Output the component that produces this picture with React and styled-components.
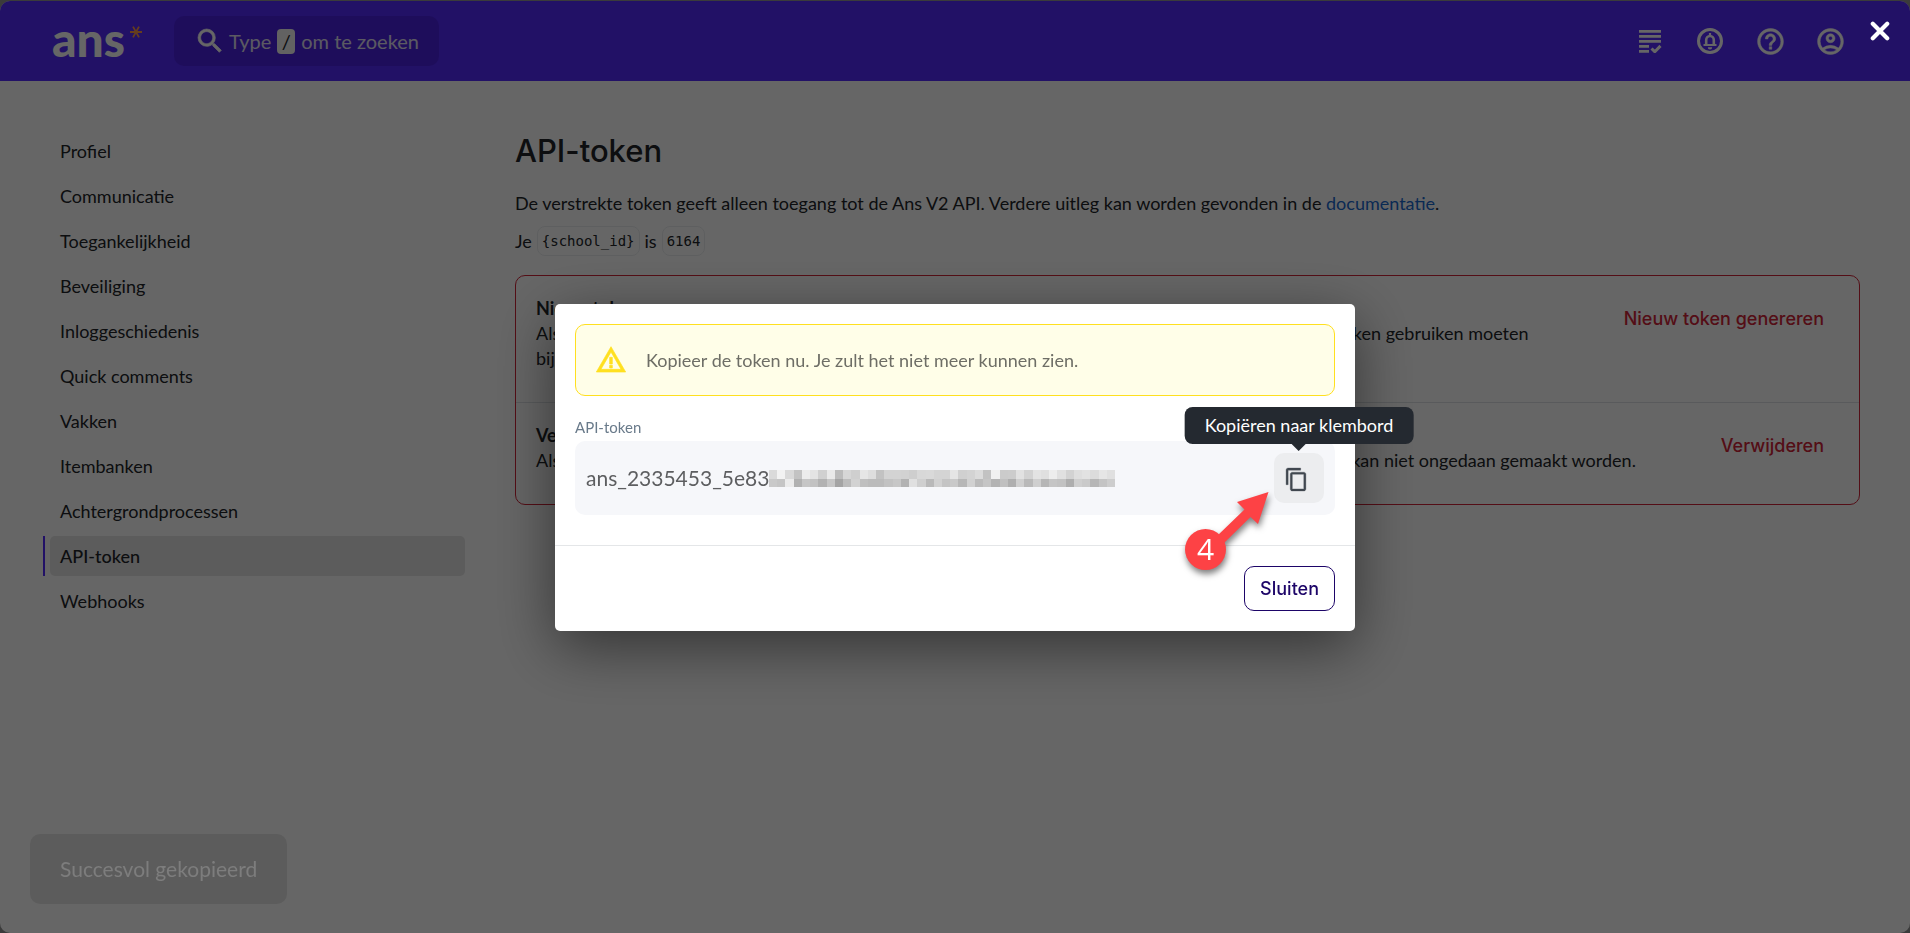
import React from 'react'
import styled, { createGlobalStyle } from 'styled-components'
import {
  MdSearch,
  MdHelpOutline,
  MdOutlineAccountCircle,
  MdContentCopy,
  MdWarningAmber
} from 'react-icons/md'

const colors = {
  brand: '#552bff',
  brandDark: '#4d22e4',
  navy: '#1d0568',
  text: '#212529',
  danger: '#d22438',
  link: '#1a69d0',
  warning: '#ffe01f'
}

const textFont = "Lato, 'Open Sans', sans-serif"
const headFont = "Inter, 'Open Sans', sans-serif"

const GlobalStyle = createGlobalStyle`
  * {
    box-sizing: border-box;
  }

  body {
    margin: 0;
    background: #939393;
    color: ${colors.text};
    font-family: ${textFont};
    font-size: 18px;
    line-height: 25px;
  }

  button {
    font: inherit;
    border: 0;
    padding: 0;
    background: none;
    cursor: pointer;
  }

  /* the icon set puts an empty bounding path in every icon */
  svg path[fill='none'][d^='M0 0h24'] {
    stroke: none;
  }
`

const Page = styled.div`
  min-height: calc(100vh - 1px);
  margin-top: 1px;
  border-radius: 10px;
  overflow: hidden;
  background: #ffffff;
`

const TopBar = styled.header`
  display: flex;
  align-items: center;
  height: 80px;
  padding: 0 50px 0 52px;
  background: ${colors.brand};
`

const Logo = styled.a`
  display: flex;
  color: #ffffff;
  font-size: 48px;
  font-weight: 900;
  line-height: 46px;
  padding-bottom: 4px;
  text-decoration: none;

  svg {
    margin: 10px 0 0 5px;
  }
`

const Search = styled.button`
  display: flex;
  align-items: center;
  height: 50px;
  margin-left: 32px;
  padding: 0 20px;
  border-radius: 10px;
  background: ${colors.brandDark};
  color: #e4e0f4;
  font-size: 20px;

  svg {
    margin-right: 3px;
    color: #ffffff;
  }
`

const Key = styled.kbd`
  width: 18px;
  margin: 0 6px;
  border-radius: 4px;
  background: #f4f4f4;
  color: ${colors.text};
  font-family: ${textFont};
  text-align: center;
`

const Tools = styled.div`
  display: flex;
  margin-left: auto;
`

const Tool = styled.button`
  display: flex;
  justify-content: center;
  align-items: center;
  width: 60px;
  height: 50px;
  color: #ffffff;
`

const Columns = styled.div`
  display: grid;
  grid-template-columns: 422px 1fr;
  gap: 50px;
  padding: 50px 50px 0 43px;
`

const Menu = styled.nav`
  display: flex;
  flex-direction: column;
  gap: 5px;
`

const MenuItem = styled.a`
  display: flex;
  height: 40px;
  border-left: 2px solid ${p => (p.$active ? colors.brand : 'transparent')};
  padding-left: 5px;
  color: inherit;
  font-weight: ${p => (p.$active ? 500 : 400)};
  line-height: 40px;
  text-decoration: none;

  span {
    flex: 1;
    padding: 0 10px;
    border-radius: 5px;
    background: ${p => (p.$active ? '#e6e6e6' : 'none')};
  }
`

const Title = styled.h1`
  margin: 0 0 20px;
  font-family: ${headFont};
  font-size: 31px;
  font-weight: 500;
  line-height: 40px;
`

const Intro = styled.p`
  margin: 0 0 10px;

  a {
    color: ${colors.link};
    text-decoration: none;
  }
`

const SchoolId = styled.p`
  display: flex;
  align-items: center;
  gap: 5px;
  margin: 0 0 19px;
`

const Code = styled.code`
  padding: 0 4px;
  border: 1px solid #eceef0;
  border-radius: 8px;
  font-family: 'DejaVu Sans Mono', monospace;
  font-size: 14px;
  line-height: 28px;
`

const DangerZone = styled.section`
  border: 1px solid ${colors.danger};
  border-radius: 10px;
`

const DangerRow = styled.div`
  display: flex;
  justify-content: space-between;
  align-items: flex-start;
  padding: 20px 20px 31px;

  & + & {
    border-top: 1px solid #dee2e6;
  }

  p {
    margin: 0;
  }
`

const DangerButton = styled.button`
  padding: 0 15px;
  color: ${colors.danger};
  font-family: ${headFont};
  font-weight: 500;
  line-height: 45px;
  white-space: nowrap;
`

const Overlay = styled.div`
  position: fixed;
  inset: 0;
  display: flex;
  justify-content: center;
  align-items: center;
  padding-top: 2px;
  background: rgba(0, 0, 0, 0.6);
`

const CloseButton = styled.button`
  position: absolute;
  top: 21px;
  right: 20px;
  display: flex;
  color: #ffffff;
`

const Toast = styled.div`
  position: absolute;
  left: 30px;
  bottom: 29px;
  padding: 0 30px;
  border-radius: 10px;
  background: rgba(0, 0, 0, 0.1);
  color: #7d7d7d;
  font-size: 21px;
  line-height: 70px;
`

const Modal = styled.div`
  position: relative;
  width: 800px;
  max-width: 100%;
  border-radius: 5px;
  background: #ffffff;
  box-shadow: 0 16px 60px rgba(0, 0, 0, 0.5);
`

const ModalBody = styled.div`
  padding: 20px 20px 30px;
`

const Notice = styled.div`
  display: flex;
  align-items: center;
  gap: 19px;
  height: 72px;
  margin-bottom: 20px;
  padding: 0 19px;
  border: 1px solid ${colors.warning};
  border-radius: 10px;
  background: #fffee8;
  color: #6e6e66;

  svg {
    color: ${colors.warning};
  }
`

const Label = styled.label`
  display: block;
  margin-bottom: 3px;
  color: #697a8a;
  font-size: 15px;
  line-height: 22px;
`

const TokenBox = styled.div`
  display: flex;
  align-items: center;
  height: 74px;
  padding: 0 11px;
  border-radius: 10px;
  background: #f6f7fa;
`

const TokenInput = styled.input`
  width: 183px;
  padding: 0 0 2px;
  border: 0;
  outline: 0;
  background: none;
  color: #5d5e60;
  font-family: ${textFont};
  font-size: 21px;
`

const CopyButton = styled.button`
  && {
    padding: 2px 0 0 10px;
  }
  position: relative;
  display: flex;
  align-items: center;
  width: 50px;
  height: 50px;
  margin-left: auto;
  border-radius: 10px;
  background: #ecedef;
  color: #414850;
`

const Tooltip = styled.span`
  position: absolute;
  left: 50%;
  bottom: 59px;
  transform: translateX(-50%);
  padding: 0 20px;
  border-radius: 8px;
  background: #242930;
  color: #ffffff;
  line-height: 37px;
  white-space: nowrap;

  &::after {
    content: '';
    position: absolute;
    top: 100%;
    left: 50%;
    margin-left: -7px;
    border: 7px solid transparent;
    border-top-color: #242930;
    border-bottom: 0;
  }
`

const ModalFooter = styled.footer`
  display: flex;
  justify-content: flex-end;
  padding: 20px;
  border-top: 1px solid #e4e6e8;
`

const OutlineButton = styled.button`
  && {
    padding: 0 15px;
    border: 1px solid ${colors.navy};
  }
  border-radius: 10px;
  color: ${colors.navy};
  font-family: ${headFont};
  font-weight: 500;
  line-height: 43px;
`

const Marker = styled.svg`
  position: absolute;
  right: 76px;
  bottom: 49px;
  filter: drop-shadow(1px 4px 3px rgba(0, 0, 0, 0.5));
  pointer-events: none;

  text {
    font-family: 'Open Sans', sans-serif;
    font-size: 30px;
  }
`

const menu = [
  'Profiel',
  'Communicatie',
  'Toegankelijkheid',
  'Beveiliging',
  'Inloggeschiedenis',
  'Quick comments',
  'Vakken',
  'Itembanken',
  'Achtergrondprocessen',
  'API-token',
  'Webhooks'
]

// grey level of every block in the masked part of the token
const maskRows = [
  'da f2 d9 c3 ec e4 d0 e9 bb d6 cf e6 de c2 d3 d3 d2 ce d8 d9 d4 d4 e5 d0 d3 db c2 f0 cb cc e1 d2 e3 df ed e0 d2 de e2 dc e6 e0',
  'c9 c5 eb b1 c6 c2 b2 c6 a4 bc d2 bf bb bb c2 c7 b2 e0 cf b9 d1 c4 c9 b7 d1 bb c5 b3 c0 af cf b9 cf b6 c5 c2 ae cf ca b6 c4 cd'
].map(row => row.split(' '))

function Asterisk () {
  return (
    <svg width='12' height='12' viewBox='-6 -6 12 12' stroke='#ff9a4a' strokeWidth='1.8'>
      <path d='M-6 0H6M-3 -5.4L3 5.4M3 -5.4L-3 5.4' />
    </svg>
  )
}

function GradingIcon () {
  return (
    <svg width='24' height='24' viewBox='0 0 24 24' fill='currentColor'>
      <path d='M1 1h22v2.700H1zM1 6h22v2.700H1zM1 11h22v2.700H1zM1 16h10v2.700H1zM1 21h10v2.700H1z' />
      <path d='M13.500 19.500l3.300 3.200 5.700-5.800' fill='none' stroke='currentColor' strokeWidth='3' />
    </svg>
  )
}

function BellIcon () {
  return (
    <svg width='26' height='26' viewBox='0 0 26 26' fill='none' stroke='currentColor' strokeWidth='3'>
      <circle cx='13' cy='13' r='11.500' />
      <path d='M9.200 17v-5a3.800 4 0 0 1 7.600 0v5' strokeWidth='2.600' />
      <path d='M6.500 17h13M13 5v3' strokeWidth='2.200' />
      <path d='M10.800 19.200h4.400a2.200 2.200 0 0 1-4.400 0z' fill='currentColor' stroke='none' />
    </svg>
  )
}

function Mask () {
  return (
    <svg width='346' height='17' viewBox='0 0 42 2' preserveAspectRatio='none' shapeRendering='crispEdges'>
      {maskRows.map((row, y) =>
        row.map((level, x) => (
          <rect key={`${x}-${y}`} x={x} y={y} width='1' height='1' fill={`#${level}${level}${level}`} />
        ))
      )}
    </svg>
  )
}

function StepMarker () {
  return (
    <Marker width='104' height='100' viewBox='0 0 104 100' fill='#fd4245'>
      <path d='M93.500 10L62 20l7.500 7.500L42 54l7 7 26.500-26L83 42z' />
      <circle cx='30.500' cy='67.500' r='20.500' />
      <text x='30.500' y='78' fill='#ffffff' textAnchor='middle'>4</text>
    </Marker>
  )
}

function TokenModal () {
  return (
    <Modal role='dialog' aria-label='API-token'>
      <ModalBody>
        <Notice>
          <MdWarningAmber size={32} stroke='currentColor' strokeWidth='0.5' />
          Kopieer de token nu. Je zult het niet meer kunnen zien.
        </Notice>
        <Label htmlFor='token'>API-token</Label>
        <TokenBox>
          <TokenInput id='token' readOnly value='ans_2335453_5e83' />
          <Mask />
          <CopyButton aria-label='Kopiëren'>
            <MdContentCopy size={25} stroke='currentColor' strokeWidth='0.3' />
            <Tooltip role='tooltip'>Kopiëren naar klembord</Tooltip>
          </CopyButton>
        </TokenBox>
      </ModalBody>
      <ModalFooter>
        <OutlineButton>Sluiten</OutlineButton>
      </ModalFooter>
      <StepMarker />
    </Modal>
  )
}

export default function App () {
  return (
    <>
      <GlobalStyle />
      <Page>
        <TopBar>
          <Logo href='#'>
            ans
            <Asterisk />
          </Logo>
          <Search>
            <MdSearch size={32} stroke='currentColor' strokeWidth='0.5' />
            Type<Key>/</Key>om te zoeken
          </Search>
          <Tools>
            <Tool aria-label='Taken'><GradingIcon /></Tool>
            <Tool aria-label='Meldingen'><BellIcon /></Tool>
            <Tool aria-label='Help'><MdHelpOutline size={31} stroke='currentColor' strokeWidth='0.4' /></Tool>
            <Tool aria-label='Account'><MdOutlineAccountCircle size={31} stroke='currentColor' strokeWidth='0.4' /></Tool>
          </Tools>
        </TopBar>
        <Columns>
          <Menu>
            {menu.map(item => (
              <MenuItem key={item} href='#' $active={item === 'API-token'}>
                <span>{item}</span>
              </MenuItem>
            ))}
          </Menu>
          <main>
            <Title>API-token</Title>
            <Intro>
              De verstrekte token geeft alleen toegang tot de Ans V2 API. Verdere uitleg kan worden gevonden in
              de <a href='#'>documentatie</a>.
            </Intro>
            <SchoolId>
              Je <Code>{'{school_id}'}</Code> is <Code>6164</Code>
            </SchoolId>
            <DangerZone>
              <DangerRow>
                <p>
                  <strong>Nieuw token</strong>
                  <br />
                  Als je een nieuw API-token genereert, verliest het vorige token haar toegang. Alle applicaties die deze token gebruiken moeten
                  <br />
                  bijgewerkt worden.
                </p>
                <DangerButton>Nieuw token genereren</DangerButton>
              </DangerRow>
              <DangerRow>
                <p>
                  <strong>Verwijder token</strong>
                  <br />
                  Als je de API-token verwijdert, verliezen alle applicaties die deze API-token gebruiken hun toegang. Dat kan niet ongedaan gemaakt worden.
                </p>
                <DangerButton>Verwijderen</DangerButton>
              </DangerRow>
            </DangerZone>
          </main>
        </Columns>
      </Page>
      <Overlay>
        <TokenModal />
        <CloseButton aria-label='Venster sluiten'>
          <svg width='20' height='20' viewBox='0 0 20 20' stroke='currentColor' strokeWidth='4.200' strokeLinecap='round'>
            <path d='M2.800 2.800l14.400 14.400M17.200 2.800L2.800 17.200' />
          </svg>
        </CloseButton>
        <Toast role='status'>Succesvol gekopieerd</Toast>
      </Overlay>
    </>
  )
}
